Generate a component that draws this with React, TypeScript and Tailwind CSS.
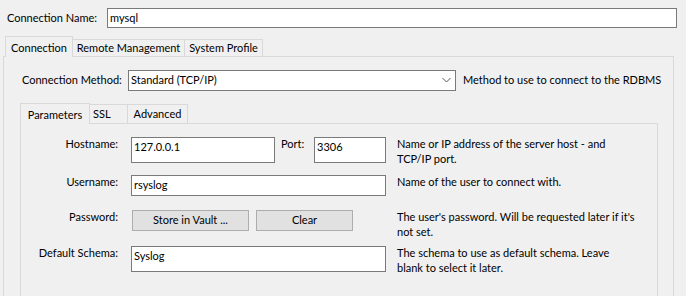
import React from "react";

const inputCls = "bg-white border border-[#7a7a7a] px-[2px] flex items-center";
const tallInputCls = "bg-white border border-[#7a7a7a] px-[2px] flex items-start leading-[15px] pt-[1px]";

function Row({
  label,
  desc,
  children,
  className = "",
}: {
  label: string;
  desc: string[];
  children: React.ReactNode;
  className?: string;
}) {
  return (
    <div className={"flex items-start " + className}>
      <div className="w-[97px] text-right leading-[15px] mt-[-1px]">{label}</div>
      <div className="w-[13px] shrink-0" />
      <div className="w-[255px] shrink-0 flex items-start">{children}</div>
      <div className="ml-[11px] leading-[15px] mt-[-1px]">
        {desc.map((d) => (
          <div key={d} className="whitespace-nowrap">
            {d}
          </div>
        ))}
      </div>
    </div>
  );
}

export default function App() {
  return (
    <div
      className="w-[686px] h-[296px] overflow-hidden bg-[#f0f0f0] text-[11px] text-black"
      style={{ fontFamily: "Lato, 'Liberation Sans', sans-serif" }}
    >
      {/* Connection name */}
      <div className="flex items-center pt-[8px]">
        <div className="pl-[7px] w-[107px]">Connection Name:</div>
        <div className={inputCls + " w-[570px] h-[20px]"}>mysql</div>
      </div>

      {/* Outer tabs */}
      <div className="flex items-end ml-[5px] mt-[8px] h-[21px] relative z-10">
        <div className="h-[21px] px-[6px] border border-b-0 border-[#d9d9d9] bg-[#f0f0f0] flex items-start pt-[3px] w-[68px] justify-center">
          Connection
        </div>
        <div className="h-[17px] border border-l-0 border-b-0 border-[#d9d9d9] flex items-center justify-center w-[112px] mb-[1px]">
          Remote Management
        </div>
        <div className="h-[17px] border border-l-0 border-b-0 border-[#d9d9d9] flex items-center justify-center w-[78px] mb-[1px]">
          System Profile
        </div>
      </div>

      {/* Outer panel */}
      <div className="ml-[3px] w-[671px] h-[260px] mt-[-1px] border border-[#d9d9d9] bg-[#f0f0f0]">
        {/* Connection method */}
        <div className="flex items-center pt-[13px]">
          <div className="pl-[18px] w-[124px]">Connection Method:</div>
          <div className="w-[328px] h-[21px] bg-white border border-[#7a7a7a] flex items-center justify-between pl-[2px] pr-[4px]">
            <span>Standard (TCP/IP)</span>
            <svg width="9" height="6" viewBox="0 0 9 6" className="mb-[2px]">
              <path d="M0.5 1 L4.5 5 L8.5 1" fill="none" stroke="#555" strokeWidth="1" />
            </svg>
          </div>
          <div className="ml-[7px]">Method to use to connect to the RDBMS</div>
        </div>

        {/* Inner tabs */}
        <div className="flex items-end ml-[16px] mt-[12px] h-[21px] relative z-10">
          <div className="h-[21px] border border-b-0 border-[#d9d9d9] bg-[#f0f0f0] flex items-start pt-[3px] w-[70px] justify-center">
            Parameters
          </div>
          <div className="h-[19px] border border-l-0 border-b-0 border-[#d9d9d9] flex items-center pl-[3px] w-[38px] mb-[1px]">
            SSL
          </div>
          <div className="h-[19px] border border-l-0 border-b-0 border-[#d9d9d9] flex items-center justify-center w-[60px] mb-[1px]">
            Advanced
          </div>
        </div>

        {/* Inner panel */}
        <div className="ml-[16px] w-[638px] h-[200px] mt-[-1px] border border-[#d9d9d9] bg-[#f0f0f0] pt-[13px]">
          <Row
            label="Hostname:"
            desc={["Name or IP address of the server host - and", "TCP/IP port."]}
            className="h-[26px]"
          >
            <div className={tallInputCls + " w-[144px] h-[26px]"}>127.0.0.1</div>
            <div className="ml-[6px] w-[33px] leading-[15px] mt-[-1px]">Port:</div>
            <div className={tallInputCls + " w-[72px] h-[26px]"}>3306</div>
          </Row>
          <Row label="Username:" desc={["Name of the user to connect with."]} className="mt-[12px] h-[21px]">
            <div className={inputCls + " w-[255px] h-[21px]"}>rsyslog</div>
          </Row>
          <Row
            label="Password:"
            desc={["The user's password. Will be requested later if it's", "not set."]}
            className="mt-[14px] h-[21px]"
          >
            <div className="ml-[1px] w-[117px] h-[21px] bg-[#e1e1e1] border border-[#adadad] flex items-center justify-center">
              Store in Vault ...
            </div>
            <div className="ml-[7px] w-[97px] h-[21px] bg-[#e1e1e1] border border-[#adadad] flex items-center justify-center">
              Clear
            </div>
          </Row>
          <Row
            label="Default Schema:"
            desc={["The schema to use as default schema. Leave", "blank to select it later."]}
            className="mt-[15px] h-[26px]"
          >
            <div className={tallInputCls + " w-[255px] h-[26px]"}>Syslog</div>
          </Row>
        </div>
      </div>
    </div>
  );
}
